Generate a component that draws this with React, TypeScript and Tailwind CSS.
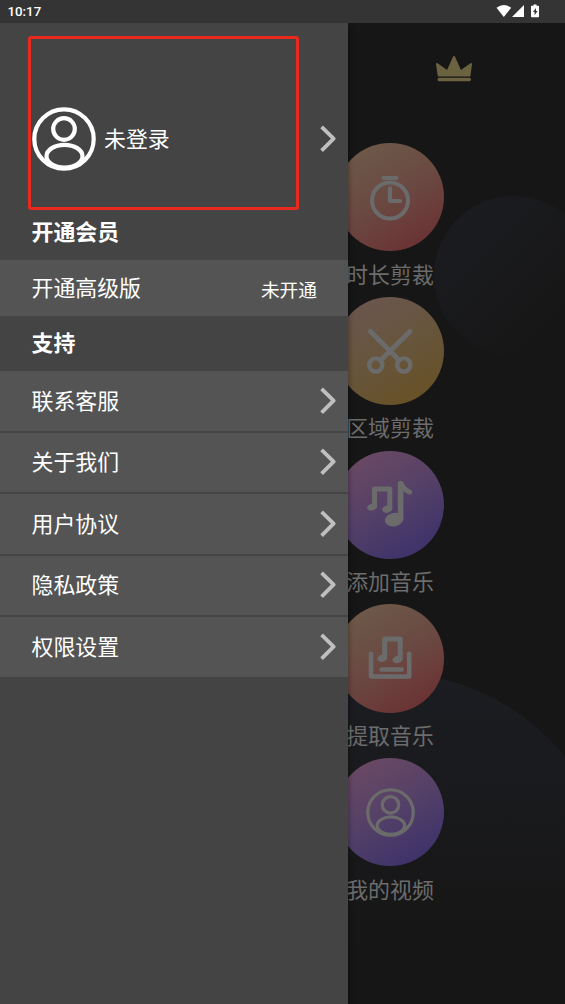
import type { ReactNode } from "react";

const UserIcon = ({ className }: { className: string }) => (
  <svg viewBox="0 0 64 64" fill="none" stroke="currentColor" strokeWidth="4.2" className={className}>
    <circle cx="32" cy="32" r="29.7" />
    <circle cx="32" cy="22" r="10.8" />
    <ellipse cx="32.5" cy="49.2" rx="18" ry="11.4" />
  </svg>
);

const TimerIcon = () => (
  <svg viewBox="0 0 48 48" fill="none" stroke="currentColor" className="size-12">
    <circle cx="24" cy="27.5" r="18" strokeWidth="4" />
    <path d="M17.5 5h13" strokeWidth="4" strokeLinecap="round" />
    <path d="M24 15v13h10" strokeWidth="4.2" strokeLinecap="round" strokeLinejoin="round" />
  </svg>
);

const ScissorsIcon = () => (
  <svg viewBox="0 0 48 48" fill="none" stroke="currentColor" strokeLinecap="round" className="size-12">
    <path d="M4.5 4.5L33 33M44 4.5L15 33" strokeWidth="5" />
    <circle cx="9.8" cy="38" r="6.6" strokeWidth="4.4" />
    <circle cx="37.8" cy="38" r="6.6" strokeWidth="4.4" />
  </svg>
);

const MusicIcon = () => (
  <svg viewBox="0 0 48 48" fill="none" stroke="currentColor" strokeLinecap="round" strokeLinejoin="round" className="size-12">
    <path d="M8.5 25V8h15.3V27" strokeWidth="5" />
    <ellipse cx="6.2" cy="26" rx="5.2" ry="3.4" transform="rotate(-15 6.2 26)" fill="currentColor" stroke="none" />
    <ellipse cx="21.3" cy="28" rx="5.2" ry="3.6" transform="rotate(-15 21.3 28)" fill="currentColor" stroke="none" />
    <path d="M34.6 37V2.5" strokeWidth="5.6" />
    <path d="M34.6 2.5q3.8 6.5 9 8.5" strokeWidth="5" />
    <ellipse cx="28.2" cy="38.6" rx="9.4" ry="6.7" transform="rotate(-12 28.2 38.6)" fill="currentColor" stroke="none" />
  </svg>
);

const ExtractIcon = () => (
  <svg viewBox="0 0 48 48" fill="none" stroke="currentColor" strokeLinecap="round" strokeLinejoin="round" className="size-12">
    <path d="M5 19.7v22.8h38.2v-22.8" strokeWidth="4.6" />
    <path d="M15.5 35.5h20.3" strokeWidth="4.4" />
    <path d="M18.7 23V5h15.5V25" strokeWidth="5" />
    <ellipse cx="16.2" cy="24.2" rx="5" ry="3.6" transform="rotate(-15 16.2 24.2)" fill="currentColor" stroke="none" />
    <ellipse cx="31.4" cy="25.5" rx="5" ry="3.6" transform="rotate(-15 31.4 25.5)" fill="currentColor" stroke="none" />
  </svg>
);

const Chevron = () => (
  <svg viewBox="0 0 16 28" fill="none" stroke="#bfbfbf" strokeWidth="3.8" className="h-7 w-4">
    <path d="M1.6 1.8L13.6 13.7L1.6 25.6" strokeLinejoin="round" />
  </svg>
);

type Feature = { label: string; color: string; icon: ReactNode };

const features: Feature[] = [
  { label: "时长剪裁", color: "from-[#6d5d4b] via-[#6a4942] to-[#6a2a30]", icon: <TimerIcon /> },
  { label: "区域剪裁", color: "from-[#6b5653] via-[#67553c] to-[#68501e]", icon: <ScissorsIcon /> },
  { label: "添加音乐", color: "from-[#704b62] via-[#544067] to-[#372d6b]", icon: <MusicIcon /> },
  { label: "提取音乐", color: "from-[#6d5d4b] via-[#6a4942] to-[#6a2a30]", icon: <ExtractIcon /> },
  { label: "我的视频", color: "from-[#704b62] via-[#544067] to-[#372d6b]", icon: <UserIcon className="size-[49px]" /> },
];

const supportItems = ["联系客服", "关于我们", "用户协议", "隐私政策", "权限设置"];

const StatusBar = () => (
  <div className="flex h-[23px] items-center justify-between bg-[#343434] pr-[25px] pl-[7.5px] text-white">
    <span className="font-[Roboto] text-[13.3px] leading-[23px] font-medium">10:17</span>
    <svg viewBox="0 0 44 14" fill="currentColor" className="mb-px h-3.5 w-11">
      <path d="M.5 3.8Q7.8-1.8 15.2 3.8L7.8 13z" />
      <path d="M28 1v12H16z" />
      <path d="M37.5.5h3v1.2h1.8q.7 0 .7.8v10q0 .8-.8.8h-6.4q-.8 0-.8-.8v-10q0-.8.7-.8h1.8z" />
      <path d="M40 4l-3 4h1.6v3.3l3-4.3H40z" fill="#343434" />
    </svg>
  </div>
);

const Home = () => (
  <div className="relative h-[981px] overflow-hidden bg-[#161616]">
    <div className="absolute top-[173px] left-[434px] size-[160px] rounded-full bg-linear-135 from-[#1c1d22] to-[#161616] to-80%" />
    <div className="absolute top-[650px] left-[165px] size-[450px] rounded-full bg-linear-to-b from-[#1c1d22] to-[#161616] to-60%" />
    <div className="relative flex justify-end pt-8 pr-[92px]">
      <svg viewBox="0 0 38 28" fill="#6b6240" className="h-7 w-[38px]">
        <path
          d="M2 9L12.5 16.5L19 2L25.5 16.5L36 9L34.5 20.5H3.7z"
          stroke="#6b6240"
          strokeWidth="2"
          strokeLinejoin="round"
        />
        <rect x="2.5" y="22.8" width="33.5" height="3.4" rx="1.7" />
      </svg>
    </div>
    <div className="relative mt-[60px] ml-[336px] flex w-[108px] flex-col">
      {features.map((item) => (
        <div key={item.label} className="flex h-[153.75px] flex-col items-center">
          <div
            className={`flex size-[108.4px] shrink-0 items-center justify-center rounded-full bg-linear-150 text-[#6b6b6b] ${item.color}`}
          >
            {item.icon}
          </div>
          <span className="mt-[6.2px] text-[21.9px] leading-8 whitespace-nowrap text-[#6c6c6c]">{item.label}</span>
        </div>
      ))}
    </div>
  </div>
);

const Drawer = () => (
  <div className="absolute top-[23px] left-0 flex h-[981px] w-[348px] flex-col bg-[#444444] text-[21.9px] text-white shadow-[2px_4px_4px_rgba(0,0,0,0.25)]">
    <div className="flex h-[182px] items-center pt-[49px] pr-3 pl-8">
      <UserIcon className="size-16" />
      <span className="ml-2 grow pb-px">未登录</span>
      <Chevron />
    </div>
    <h2 className="h-[55px] pl-[31.5px] leading-[51px] font-bold">开通会员</h2>
    <div className="flex h-[56px] items-center justify-between bg-[#545454] pr-[31px] pl-[31.5px]">
      <span className="pb-px">开通高级版</span>
      <span className="pt-[2px] text-[18.7px]">未开通</span>
    </div>
    <h2 className="h-[55px] pl-[31.5px] leading-[52px] font-bold">支持</h2>
    <ul>
      {supportItems.map((name) => (
        <li
          key={name}
          className="flex h-[61.5px] items-center justify-between border-b-2 border-[#454545] bg-[#545454] pr-3 pl-[31.5px] last:h-[59.5px] last:border-b-0"
        >
          <span className="pb-px">{name}</span>
          <Chevron />
        </li>
      ))}
    </ul>
    <div className="absolute top-[13px] left-[28px] h-[174px] w-[270.5px] rounded-[3px] border-3 border-[#e8291d]" />
  </div>
);

const App = () => {
  return (
    <div className="relative h-[1004px] w-[565px] overflow-hidden bg-[#161616] font-['Noto_Sans_CJK_SC',sans-serif]">
      <StatusBar />
      <Home />
      <Drawer />
    </div>
  );
};

export default App;
